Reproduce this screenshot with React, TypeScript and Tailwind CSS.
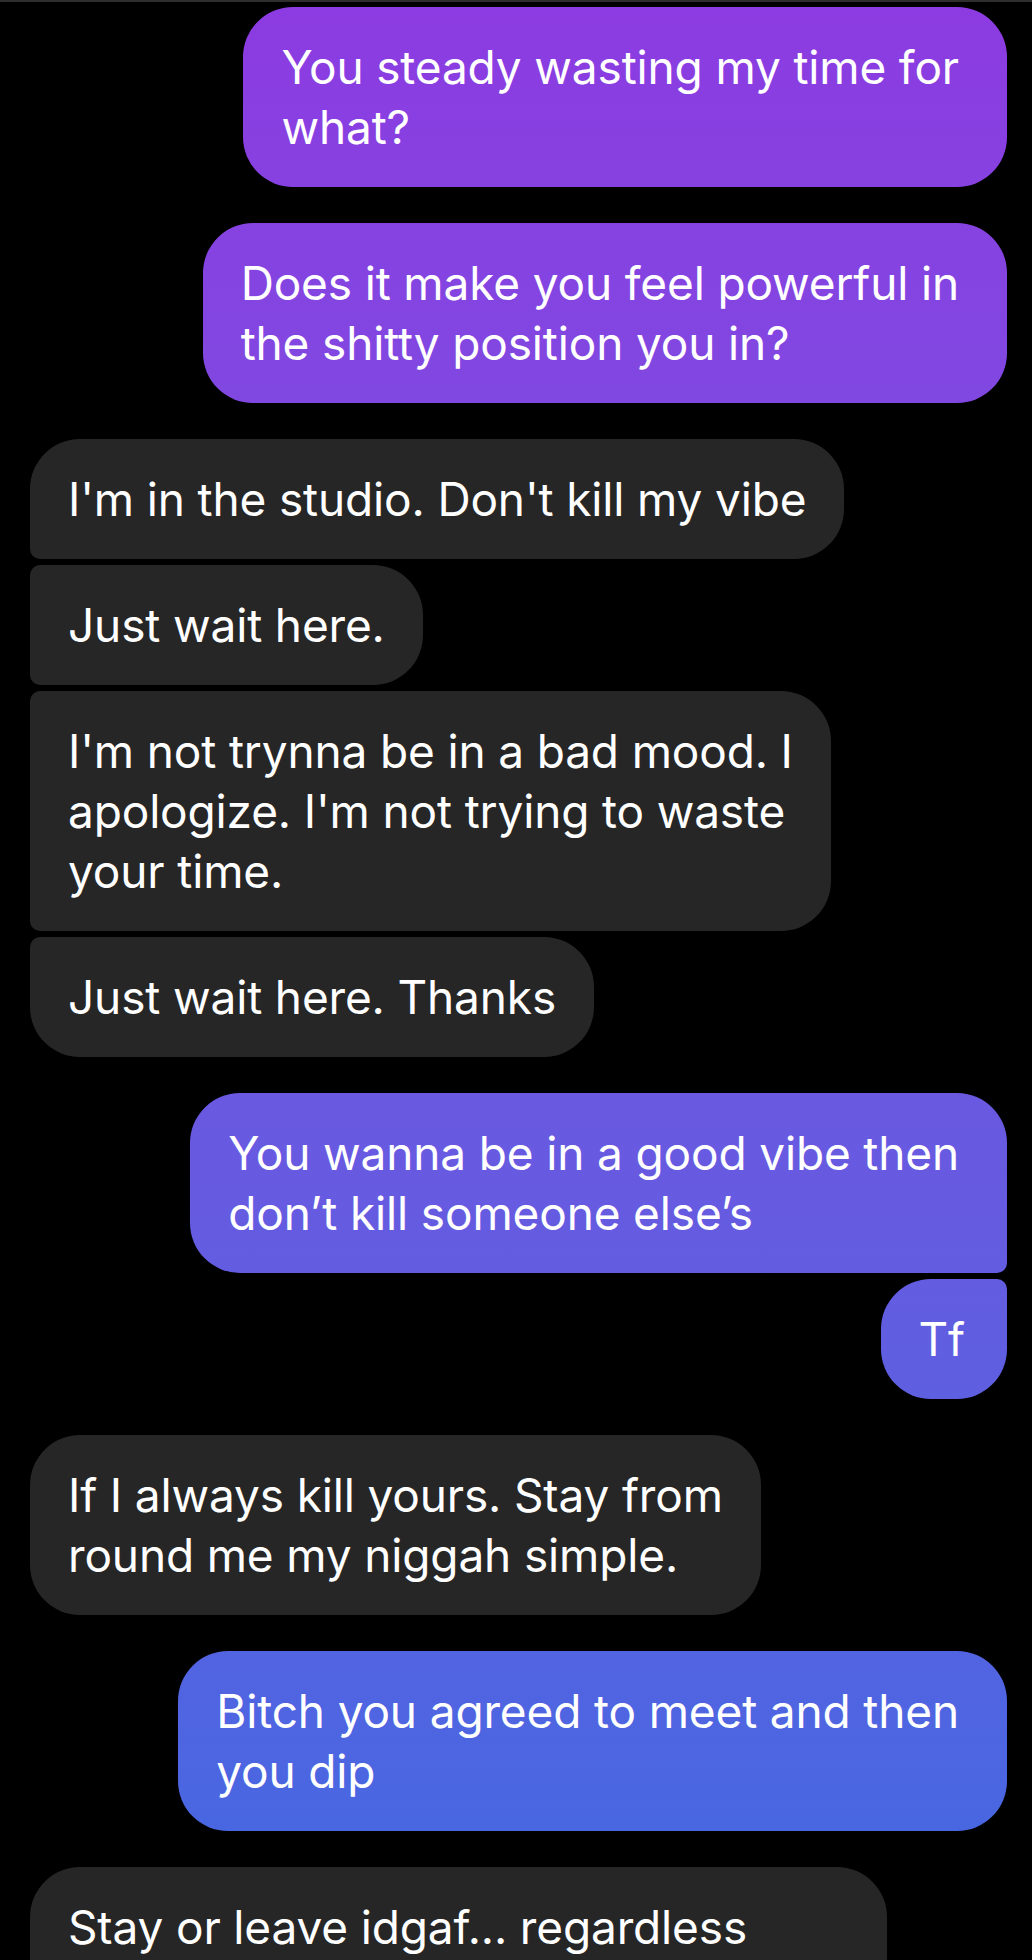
const msgs: { me: boolean; lines: string[]; shape: string; gap: string; w?: string; pr?: string }[] = [
  { me: true, lines: ["You steady wasting my time for", "what?"], shape: "rounded-[50px]", gap: "mt-[5px]" },
  { me: true, lines: ["Does it make you feel powerful in", "the shitty position you in?"], shape: "rounded-[50px]", gap: "mt-9" },
  { me: false, lines: ["I'm in the studio. Don't kill my vibe"], shape: "rounded-[50px] rounded-bl-[10px]", gap: "mt-9" },
  { me: false, lines: ["Just wait here."], shape: "rounded-r-[50px] rounded-l-[10px]", gap: "mt-[6px]" },
  { me: false, lines: ["I'm not trynna be in a bad mood. I", "apologize. I'm not trying to waste", "your time."], shape: "rounded-r-[50px] rounded-l-[10px]", gap: "mt-[6px]" },
  { me: false, lines: ["Just wait here. Thanks"], shape: "rounded-[50px] rounded-tl-[10px]", gap: "mt-[6px]" },
  { me: true, lines: ["You wanna be in a good vibe then", "don\u2019t kill someone else\u2019s"], shape: "rounded-[50px] rounded-br-[10px]", gap: "mt-9" },
  { me: true, lines: ["Tf"], shape: "rounded-[50px] rounded-tr-[10px]", gap: "mt-[6px]", pr: "pr-[42px]" },
  { me: false, lines: ["If I always kill yours. Stay from", "round me my niggah simple."], shape: "rounded-[50px]", gap: "mt-9" },
  { me: true, lines: ["Bitch you agreed to meet and then", "you dip"], shape: "rounded-[50px]", gap: "mt-9" },
  { me: false, lines: ["Stay or leave idgaf... regardless", "\u00a0"], shape: "rounded-[50px]", gap: "mt-9", w: "w-[857px]" },
];

export default function App() {
  return (
    <div
      className="min-h-[1960px] w-[1032px] overflow-hidden bg-black border-t-2 border-[#2e2e2e] pl-[30px] pr-[25px] flex flex-col text-white"
      style={{ fontFamily: "Inter, 'Noto Sans', sans-serif" }}
    >
      {msgs.map((m, i) => (
        <div key={i} className={`flex ${m.me ? "justify-end" : "justify-start"} ${m.gap}`}>
          <div
            className={`${m.shape} ${m.w ?? ""} ${
              m.me
                ? `bg-linear-to-b from-[#8c3be1] to-[#4169e1] bg-fixed pl-[38px] ${m.pr ?? "pr-[48px]"}`
                : "bg-[#262626] px-[38px]"
            } py-[30px] text-[46px] leading-[60px] tracking-[-0.15px] whitespace-nowrap`}
          >
            {m.lines.map((l, j) => (
              <div key={j}>{l}</div>
            ))}
          </div>
        </div>
      ))}
    </div>
  );
}
